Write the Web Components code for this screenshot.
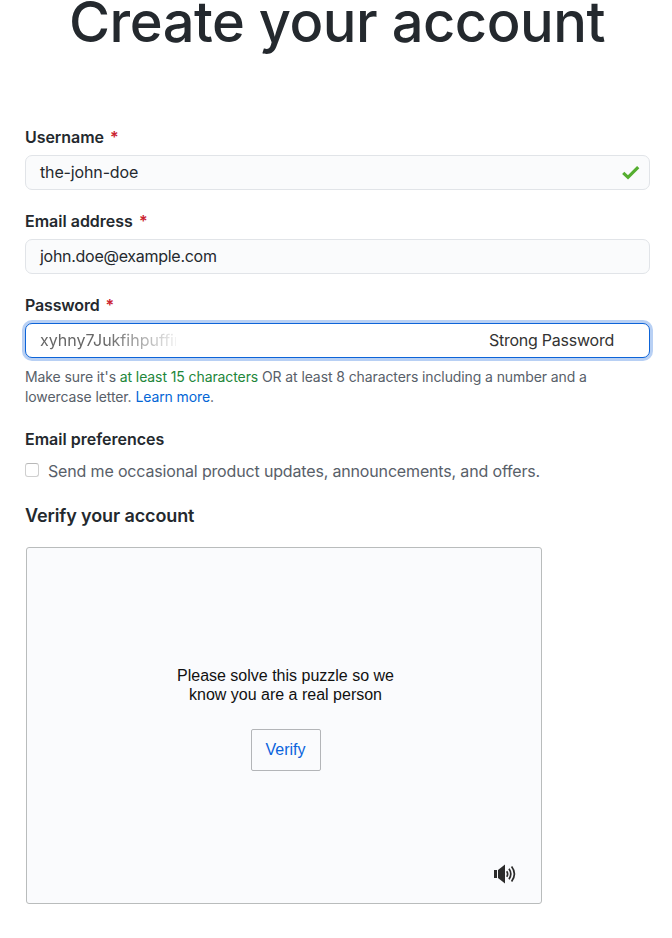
<!DOCTYPE html>
<html lang="en">
<head>
<meta charset="utf-8">
<title>Create your account</title>
<style>
  body { margin: 0; background: #fff; color: #24292e; font: 16px/24px Inter, "Liberation Sans", sans-serif; }
</style>
</head>
<body>
<signup-page></signup-page>
<script>
const define = (name, html) => customElements.define(name, class extends HTMLElement {
  constructor() {
    super();
    const t = document.createElement('template');
    t.innerHTML = html;
    this.attachShadow({ mode: 'open' }).append(t.content.cloneNode(true));
  }
});

define('page-title', `<style>
  :host { display: block; text-align: center; white-space: nowrap; }
  h1 { margin: 0; padding-left: 2px; font-size: 56px; line-height: 44px; font-weight: 530; letter-spacing: -.48px; }
</style><h1><slot></slot></h1>`);

define('form-field', `<style>
  :host { display: grid; grid-template-rows: 24px 35px; row-gap: 6px; }
  .label { font-weight: 600; white-space: nowrap; letter-spacing: var(--label-spacing, 0); }
  i { font-style: normal; color: #cb2431; margin-left: 6px; }
  .box { box-sizing: border-box; display: flex; align-items: center; padding: 0 10px 2px 14px;
    border: 1px solid #e1e4e8; border-radius: 7px; background: #fafbfc; }
  :host([focused]) .box { background: #fff; border-color: #0d64d8; box-shadow: 0 0 0 3px #b8d0f4; }
  .value { flex: 1; white-space: nowrap; letter-spacing: var(--value-spacing, 0); }
</style>
<div class="label"><slot name="label"></slot><i>*</i></div>
<div class="box"><div class="value"><slot></slot></div><slot name="end"></slot></div>`);

define('check-icon', `<style>:host { display: block; width: 18px; height: 16px; margin-right: -1px; } svg { display: block; }</style>
<svg width="18" height="16" viewBox="0 0 18 16" fill="none" stroke="#55ae30" stroke-width="3.2"><path d="M1.2 8.8 6 13.3 16.2 3.1"/></svg>`);

define('faded-text', `<style>
  :host { display: block; width: 136px; overflow: hidden; color: #666;
    -webkit-mask-image: linear-gradient(90deg, #000 48%, rgba(0,0,0,.1) 100%); mask-image: linear-gradient(90deg, #000 48%, rgba(0,0,0,.1) 100%); }
</style><slot></slot>`);

define('check-option', `<style>
  :host { display: flex; align-items: center; gap: 9px; height: 24px; color: #586069; white-space: nowrap; letter-spacing: -.16px; }
  .tick { box-sizing: border-box; width: 14px; height: 14px; border: 1px solid #cfcfcf; border-top-color: #b8b8b8; border-radius: 3px; background: #fff; margin-top: -3px; }
</style><div class="tick"></div><span><slot></slot></span>`);

define('sound-icon', `<style>:host { display: block; } svg { display: block; }</style>
<svg width="23" height="20" viewBox="0 0 23 20" fill="none" stroke="#2b2b2b" stroke-width="1.7">
<path fill="#2b2b2b" stroke="none" d="M0 6h3v8H0zM4 6l7-5.5v19L4 14z"/>
<path d="M12.7 7.2Q14.6 10 12.7 12.8M15 4.8Q18.6 10 15 15.2M17.6 2.6Q23.2 10 17.6 17.4"/></svg>`);

define('puzzle-panel', `<style>
  :host { box-sizing: border-box; display: grid; grid-template-rows: 1fr auto; width: 516px; height: 357px;
    border: 1px solid #b9bcbc; border-radius: 3px; background: #fafbfd; color: #111;
    font: 16px/18.5px "Liberation Sans", Arial, sans-serif; }
  .main { display: flex; flex-direction: column; align-items: center; padding: 119px 0 0 3px; gap: 25px; text-align: center; }
  button { box-sizing: border-box; width: 70px; height: 42px; padding: 1px 0 0; border: 1px solid #b3b5b8; border-radius: 2px; background: none; color: #0a63dc; font: inherit; }
  sound-icon { justify-self: end; margin: 0 24px 19px 0; }
</style>
<div class="main"><div><slot></slot></div><button><slot name="action"></slot></button></div><sound-icon></sound-icon>`);

define('signup-page', `<style>
  :host { display: block; }
  header { height: 64px; }
  main { display: flex; flex-direction: column; padding: 61px 22px 0 25px; }
  .fields { display: grid; gap: 19px; }
  .hint { margin: 9px 0 0; font-size: 14px; line-height: 20px; letter-spacing: -.1px; color: #586069; white-space: nowrap; }
  .hint b { font-weight: 400; color: #22863a; } .hint a { color: #0366d6; }
  h2 { margin: 20px 0 8px; font-size: 16px; line-height: 24px; font-weight: 600; }
  h3 { margin: 19px 0 18px; font-size: 18px; line-height: 27px; font-weight: 600; letter-spacing: -.11px; }
  puzzle-panel { margin-left: 1px; }
  .user { --value-spacing: -.14px; --label-spacing: -.06px; } .email { --value-spacing: -.28px; }
  .pass { --label-spacing: -.16px; }
  .strong { color: #333; margin-right: 25px; letter-spacing: -.24px; }
</style>
<header><page-title>Create your account</page-title></header>
<main>
<div class="fields">
<form-field class="user"><span slot="label">Username</span>the-john-doe<check-icon slot="end"></check-icon></form-field>
<form-field class="email"><span slot="label">Email address</span>john.doe@example.com</form-field>
<form-field class="pass" focused><span slot="label">Password</span><faded-text>xyhny7Jukfihpuffin</faded-text><span class="strong" slot="end">Strong Password</span></form-field>
</div>
<p class="hint">Make sure it's <b>at least 15 characters</b> OR at least 8 characters including a number and a<br>lowercase letter. <a>Learn more</a>.</p>
<h2>Email preferences</h2>
<check-option>Send me occasional product updates, announcements, and offers.</check-option>
<h3>Verify your account</h3>
<puzzle-panel>Please solve this puzzle so we<br>know you are a real person<span slot="action">Verify</span></puzzle-panel>
</main>`);
</script>
</body>
</html>
